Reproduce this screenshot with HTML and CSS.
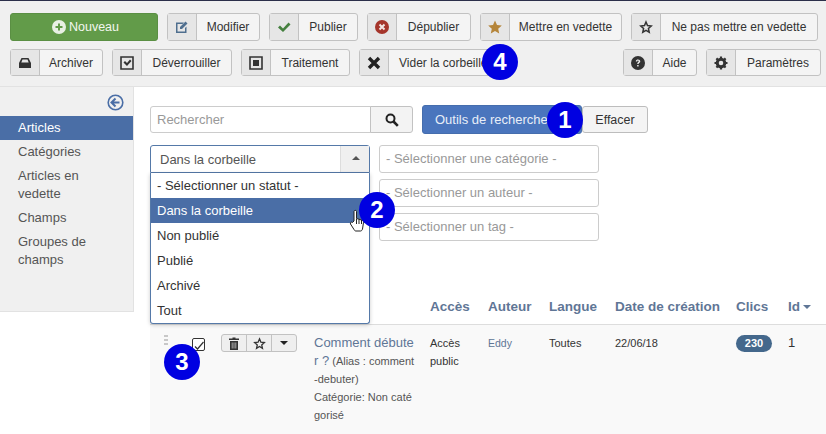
FILE: index.html
```html
<!DOCTYPE html>
<html lang="fr">
<head>
	<meta charset="utf-8">
	<title>Articles</title>
	<link rel="stylesheet" href="styles.css">
</head>
<body>
	<!-- TOOLBAR -->
	<div class="toolbar">
		<div class="toolrow">
			<button class="btn btn-new">
				<svg class="i" width="14" height="14" viewBox="0 0 14 14"><circle cx="7" cy="7" r="7" fill="#e8f0e4"/><path d="M7 3.5v7M3.5 7h7" stroke="#629b49" stroke-width="2"/></svg>
				<span>Nouveau</span>
			</button>
			<button class="btn b-modifier"><span class="ico">
				<svg width="14" height="14" viewBox="0 0 14 14"><path d="M1 2.500h8L7.500 4h-5v7.500H10V8l1.500-1.500V13H1z" fill="#4f6f8f"/><path d="M5 7l5.500-5.500 2 2L7 9H5z" fill="#4f6f8f"/></svg>
			</span><span class="lbl">Modifier</span></button>
			<button class="btn b-publier"><span class="ico">
				<svg width="14" height="12" viewBox="0 0 14 12"><path d="M1 6.500l2-2 3 3L11.500 1.500l2 2L6 11z" fill="#45803f"/></svg>
			</span><span class="lbl">Publier</span></button>
			<button class="btn b-depublier"><span class="ico">
				<svg width="14" height="14" viewBox="0 0 14 14"><circle cx="7" cy="7" r="7" fill="#a5352b"/><path d="M4.500 4.500l5 5M9.500 4.500l-5 5" stroke="#f3e6e4" stroke-width="2"/></svg>
			</span><span class="lbl">Dépublier</span></button>
			<button class="btn b-mettre"><span class="ico">
				<svg width="14" height="14" viewBox="0 0 14 14"><path d="M7 .5l2 4.500 4.800.5-3.600 3.200 1 4.800L7 11l-4.200 2.500 1-4.800L.2 5.500 5 5z" fill="#b5853a"/></svg>
			</span><span class="lbl">Mettre en vedette</span></button>
			<button class="btn b-nepas"><span class="ico">
				<svg width="14" height="14" viewBox="0 0 14 14"><path d="M7 2l1.500 3.600 3.700.4-2.800 2.500.8 3.700L7 10.300l-3.200 1.900.8-3.700L1.800 6l3.700-.4z" fill="none" stroke="#333" stroke-width="1.500"/></svg>
			</span><span class="lbl">Ne pas mettre en vedette</span></button>
		</div>
		<div class="toolrow toolrow-low">
			<button class="btn b-archiver"><span class="ico">
				<svg width="14" height="10" viewBox="0 0 14 10"><path d="M3.500 0h7L13 5v5H1V5zM4.500 1.500L3.300 4.500h7.400L9.500 1.500z" fill="#333" fill-rule="evenodd"/></svg>
			</span><span class="lbl">Archiver</span></button>
			<button class="btn b-deverr"><span class="ico">
				<svg width="14" height="14" viewBox="0 0 14 14"><path d="M1 1h12v12H1z" fill="none" stroke="#333" stroke-width="1.600"/><path d="M3.500 6.500l1.500-1.500 2 2 3-3.500 1.500 1.500L7 10z" fill="#333"/></svg>
			</span><span class="lbl">Déverrouiller</span></button>
			<button class="btn b-traitement"><span class="ico">
				<svg width="14" height="14" viewBox="0 0 14 14"><path d="M1 1h12v12H1z" fill="none" stroke="#333" stroke-width="1.600"/><path d="M4 4h6v6H4z" fill="#333"/></svg>
			</span><span class="lbl">Traitement</span></button>
			<button class="btn btn-empty"><span class="ico">
				<svg width="14" height="14" viewBox="0 0 14 14"><path d="M2 2l10 10M12 2L2 12" stroke="#222" stroke-width="3.400"/></svg>
			</span><span class="lbl">Vider la corbeille</span><span class="num num-4">4</span></button>
			<div class="toolright">
				<button class="btn b-aide"><span class="ico">
					<svg width="14" height="14" viewBox="0 0 14 14"><circle cx="7" cy="7" r="7" fill="#333"/><path d="M4.800 5.400C4.900 4 5.900 3.400 7 3.400c1.300 0 2.300.8 2.300 1.900 0 1.700-1.700 1.500-1.700 2.800H6.200c0-2 1.500-1.900 1.500-2.800 0-.4-.3-.7-.7-.7-.5 0-.8.3-.8.800zM6.200 9h1.400v1.500H6.200z" fill="#f0f0f0"/></svg>
				</span><span class="lbl">Aide</span></button>
				<button class="btn b-param"><span class="ico">
					<svg width="14" height="14" viewBox="0 0 14 14"><circle cx="7" cy="7" r="3.800" fill="none" stroke="#333" stroke-width="3"/><path d="M7 .5v13M.5 7h13M2.400 2.400l9.200 9.200M11.600 2.400l-9.200 9.200" stroke="#333" stroke-width="2.200" stroke-dasharray="2.600 7.800"/></svg>
				</span><span class="lbl">Paramètres</span></button>
			</div>
		</div>
	</div>

	<div class="page">
		<!-- SIDEBAR -->
		<div class="sidebar">
			<div class="collapse">
				<svg width="17" height="17" viewBox="0 0 17 17"><circle cx="8.500" cy="8.500" r="7.300" fill="none" stroke="#4a6ea6" stroke-width="1.600"/><path d="M8.500 4.500L4.500 8.500l4 4M4.800 8.500h7.700" fill="none" stroke="#4a6ea6" stroke-width="2"/></svg>
			</div>
			<a class="side-item active">Articles</a>
			<a class="side-item">Catégories</a>
			<a class="side-item">Articles en vedette</a>
			<a class="side-item">Champs</a>
			<a class="side-item">Groupes de champs</a>
		</div>

		<!-- CONTENT -->
		<div class="content">
			<div class="searchbar">
				<div class="search-input">Rechercher</div>
				<button class="search-go">
					<svg width="14" height="14" viewBox="0 0 14 14"><circle cx="5.500" cy="5.500" r="4" fill="none" stroke="#222" stroke-width="2"/><path d="M8.500 8.500l4.300 4.300" stroke="#222" stroke-width="2.600"/></svg>
				</button>
				<button class="btn-tools">Outils de recherche<span class="num num-1">1</span></button>
				<button class="btn-clear">Effacer</button>
			</div>

			<div class="filters">
				<div class="status">
					<div class="status-box">
						<span>Dans la corbeille</span>
						<span class="status-arrow"></span>
					</div>
					<div class="status-list">
						<div class="opt">- Sélectionner un statut -</div>
						<div class="opt picked">Dans la corbeille</div>
						<div class="opt">Non publié</div>
						<div class="opt">Publié</div>
						<div class="opt">Archivé</div>
						<div class="opt">Tout</div>
						<span class="num num-2">2</span>
						<svg class="hand" width="16" height="24" viewBox="0 0 16 24"><path d="M5 12V2.500C5 1 7.500 1 7.500 2.500V9.500l5 1.500c1.500.5 2 1 2 2.500l-1 6.500c-.2 1-1 2-2 2H7c-1 0-1.500-.5-2-1.500L1.500 15c-.7-1.500 1-2.500 2-1.500z" fill="#fff" stroke="#222"/><path d="M7.500 10v5M10 10.500v4.500M12.500 11v4" stroke="#222" fill="none"/></svg>
					</div>
				</div>
				<div class="filter-col">
					<div class="filter-box">- Sélectionner une catégorie -</div>
					<div class="filter-box">- Sélectionner un auteur -</div>
					<div class="filter-box">- Sélectionner un tag -</div>
				</div>
			</div>

			<!-- TABLE -->
			<div class="grid grid-head">
				<div></div>
				<div></div>
				<div>Accès</div>
				<div>Auteur</div>
				<div>Langue</div>
				<div>Date de création</div>
				<div>Clics</div>
				<div>Id<span class="sort"></span></div>
			</div>
			<div class="grid grid-row">
				<div class="row-tools">
					<span class="grip"></span>
					<span class="check">
						<svg width="12" height="12" viewBox="0 0 12 12"><path d="M2 6.500l2.500 2.500L10.500 2" fill="none" stroke="#333" stroke-width="1.200"/></svg>
					</span>
					<span class="num num-3">3</span>
					<div class="actions">
						<span>
							<svg width="12" height="13" viewBox="0 0 12 13"><path d="M1 1.500h3.500V.5h3v1H11V3H1zM2 4h8v9H2z" fill="#333"/><path d="M4.200 5.500v6M6 5.500v6M7.800 5.500v6" stroke="#ddd" stroke-width=".7"/></svg>
						</span>
						<span>
							<svg width="13" height="13" viewBox="0 0 14 14"><path d="M7 2l1.500 3.600 3.700.4-2.800 2.500.8 3.700L7 10.300l-3.200 1.900.8-3.700L1.800 6l3.700-.4z" fill="none" stroke="#333" stroke-width="1.400"/></svg>
						</span>
						<span><i class="caret"></i></span>
					</div>
				</div>
				<div class="title-cell">
					<a class="title-link">Comment débute<br>r ?</a> <small>(Alias : comment<br>-debuter)</small><br>
					<small>Catégorie: Non caté<br>gorisé</small>
				</div>
				<div class="access">Accès<br>public</div>
				<div class="author">Eddy</div>
				<div class="plain">Toutes</div>
				<div class="plain">22/06/18</div>
				<div><span class="hits">230</span></div>
				<div class="row-id">1</div>
			</div>
		</div>
	</div>
</body>
</html>
```

FILE: styles.css
```css
html, body {
	margin: 0;
	height: 434px;
	overflow: hidden;
}

body {
	background-color: #fff;
	font-family: "Liberation Sans", Arial, sans-serif;
	font-size: 12px;
	color: #333;
}

button {
	font-family: inherit;
	margin: 0;
	cursor: pointer;
}

/* toolbar */
.toolbar {
	height: 87px;
	box-sizing: border-box;
	padding: 12px 5px 0 10px;
	background-color: #f0f0f0;
	border-top: 1px solid #2b2f4a;
	border-bottom: 1px solid #e2e2e2;
}

.toolrow {
	display: flex;
	gap: 9px;
	height: 28px;
}

.toolrow-low {
	height: 27px;
	margin-top: 8px;
}

.toolright {
	display: flex;
	gap: 9px;
	margin-left: auto;
}

.btn {
	display: flex;
	align-items: stretch;
	position: relative;
	padding: 0;
	background-color: #f4f4f4;
	border: 1px solid #c2c2c2;
	border-radius: 3px;
	font-size: 12px;
	color: #333;
}

.ico {
	display: flex;
	flex: 0 0 28px;
	align-items: center;
	justify-content: center;
	background-color: #e6e6e6;
	border-right: 1px solid #c2c2c2;
}

.lbl {
	display: flex;
	flex: 1;
	align-items: center;
	justify-content: center;
	white-space: nowrap;
}

.b-modifier { width: 93px; }
.b-publier { width: 89px; }
.b-depublier { width: 104px; }
.b-mettre { width: 142px; }
.b-nepas { width: 187px; }
.b-archiver { width: 93px; }
.b-deverr { width: 120px; }
.b-traitement { width: 109px; }
.b-aide { width: 74px; }
.b-param { width: 115px; }

.btn-new {
	width: 148px;
	align-items: center;
	justify-content: center;
	gap: 3px;
	padding-left: 3px;
	background-color: #629b49;
	border-color: #5a8f43;
	color: #f2f7ef;
	font-size: 12.500px;
}

.btn-empty .lbl {
	justify-content: flex-start;
	padding-left: 10px;
	width: 96px;
	flex: none;
	overflow: hidden;
}

/* numbered marks over the screenshot */
.num {
	position: absolute;
	width: 36px;
	height: 36px;
	border-radius: 50%;
	background-color: #0000e1;
	color: #fff;
	font-family: "Liberation Sans", Arial, sans-serif;
	font-size: 24px;
	font-weight: bold;
	line-height: 36px;
	text-align: center;
	z-index: 3;
}

.num-4 { left: 122px; top: -6px; }
.num-1 { right: -2px; top: -4px; }
.num-2 { left: 208px; top: 19px; }
.num-3 { left: 14px; top: 10px; }

/* sidebar */
.page {
	display: flex;
	align-items: flex-start;
}

.sidebar {
	flex: 0 0 133px;
	height: 224px;
	background-color: #f0f0f0;
	border-right: 1px solid #e2e2e2;
	border-bottom: 1px solid #e2e2e2;
	font-size: 13px;
	color: #555;
}

.collapse {
	display: flex;
	justify-content: flex-end;
	padding: 7px 9px 5px 0;
	height: 17px;
}

.side-item {
	display: block;
	padding: 3px 10px 3px 18px;
	line-height: 18px;
}

.side-item.active {
	background-color: #4a6ea6;
	color: #fff;
}

/* search bar */
.content {
	flex: 1;
	padding: 19px 0 0 16px;
	min-width: 0;
}

.searchbar {
	display: flex;
	align-items: flex-start;
	height: 27px;
}

.search-input {
	width: 213px;
	height: 25px;
	padding-left: 6px;
	border: 1px solid #ccc;
	border-radius: 3px 0 0 3px;
	font-size: 13px;
	line-height: 25px;
	color: #999;
}

.search-go {
	display: flex;
	align-items: center;
	justify-content: center;
	width: 43px;
	height: 27px;
	padding: 0;
	margin-left: -1px;
	background-color: #f3f3f3;
	border: 1px solid #c2c2c2;
	border-radius: 0 3px 3px 0;
}

.btn-tools {
	position: relative;
	width: 160px;
	height: 29px;
	margin: -1px 0 0 9px;
	padding: 0 0 0 12px;
	background-color: #4a75bd;
	border: 1px solid #456dad;
	border-radius: 3px;
	color: #e8eef8;
	font-size: 13px;
	text-align: left;
	white-space: nowrap;
}

.btn-clear {
	width: 66px;
	height: 27px;
	padding: 0;
	background-color: #f4f4f4;
	border: 1px solid #bdbdbd;
	border-radius: 3px;
	color: #333;
	font-size: 12.500px;
}

/* filters */
.filters {
	display: flex;
	gap: 9px;
	margin-top: 12px;
	height: 142px;
}

.status {
	position: relative;
	width: 220px;
	z-index: 2;
}

.status-box {
	display: flex;
	justify-content: space-between;
	align-items: center;
	box-sizing: border-box;
	height: 28px;
	padding-left: 9px;
	background-color: #fff;
	border: 1px solid #5579a8;
	border-radius: 3px 3px 0 0;
	font-size: 13px;
	color: #555;
}

.status-arrow {
	position: relative;
	width: 28px;
	height: 26px;
	background-color: #f0f0f0;
	border-left: 1px solid #ddd;
}

.status-arrow:after {
	content: "";
	position: absolute;
	left: 11px;
	top: 10px;
	border: 4px solid transparent;
	border-top: 0;
	border-bottom-color: #555;
}

.status-list {
	position: absolute;
	top: 28px;
	left: 0;
	right: 0;
	background-color: #fff;
	border: 1px solid #5579a8;
	border-top: 0;
	border-radius: 0 0 3px 3px;
	box-shadow: 0 1px 4px rgba(0, 0, 0, 0.2);
	font-size: 13px;
}

.opt {
	height: 25px;
	padding-left: 6px;
	line-height: 25px;
}

.opt.picked {
	background-color: #4a6ea6;
	color: #fff;
}

.hand {
	position: absolute;
	left: 198px;
	top: 36px;
	z-index: 2;
}

.filter-col {
	display: flex;
	flex-direction: column;
	gap: 6px;
}

.filter-box {
	box-sizing: border-box;
	width: 220px;
	height: 28px;
	padding-left: 6px;
	border: 1px solid #ccc;
	border-radius: 3px;
	font-size: 13px;
	line-height: 26px;
	color: #999;
}

/* table */
.grid {
	display: grid;
	grid-template-columns: 164px 116px 58px 61px 66px 121px 52px 38px;
}

.grid-head {
	height: 38px;
	box-sizing: border-box;
	padding-bottom: 10px;
	align-items: end;
	border-bottom: 1px solid #ddd;
	font-size: 13.500px;
	font-weight: bold;
	color: #5f7696;
}

.sort {
	display: inline-block;
	margin: 0 0 2px 3px;
	border: 4px solid transparent;
	border-bottom: 0;
	border-top-color: #5f7696;
}

.grid-row {
	height: 110px;
	padding-top: 9px;
	box-sizing: border-box;
	background-color: #f9f9f9;
	font-size: 11px;
	line-height: 18px;
}

.row-tools {
	position: relative;
}

.grip {
	position: absolute;
	left: 14px;
	top: 1px;
	width: 4px;
	height: 12px;
	background-image: linear-gradient(#c8c8c8 50%, transparent 50%);
	background-size: 4px 4px;
}

.check {
	position: absolute;
	left: 42px;
	top: 4px;
	box-sizing: border-box;
	width: 13px;
	height: 13px;
	background-color: #fff;
	border: 1px solid #333;
	border-radius: 2px;
}

.actions {
	position: absolute;
	left: 71px;
	top: 0;
	display: flex;
	height: 16px;
	background-color: #efefef;
	border: 1px solid #c2c2c2;
	border-radius: 3px;
}

.actions span {
	display: flex;
	align-items: center;
	justify-content: center;
	width: 24px;
	border-right: 1px solid #c2c2c2;
}

.actions span:last-child {
	border-right: 0;
}

.caret {
	border: 4px solid transparent;
	border-bottom: 0;
	border-top-color: #222;
}

.title-cell {
	color: #555;
}

.title-link {
	font-size: 13px;
	color: #5f7696;
}

small {
	font-size: 11px;
}

.access, .plain {
	font-size: 11px;
}

.author {
	color: #5f7696;
	font-size: 10.500px;
}

.hits {
	display: inline-block;
	width: 36px;
	height: 17px;
	border-radius: 9px;
	background-color: #44688c;
	color: #fff;
	font-size: 11px;
	font-weight: bold;
	line-height: 17px;
	text-align: center;
}

.row-id {
	font-size: 13px;
}
```
